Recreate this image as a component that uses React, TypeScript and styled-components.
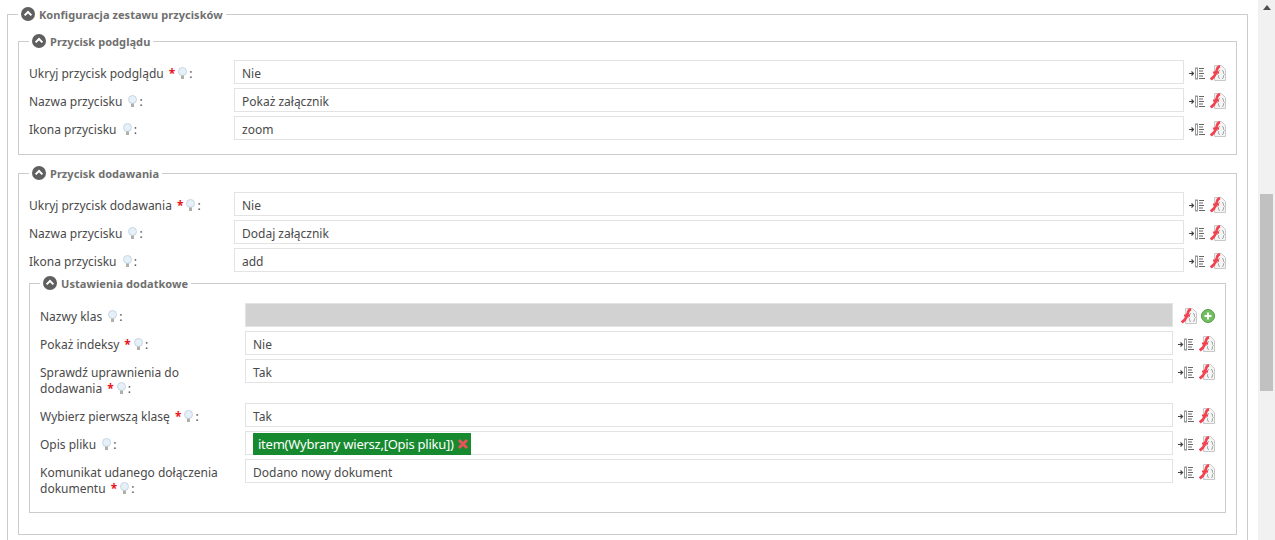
import React from "react";
import styled, { createGlobalStyle } from "styled-components";

type Field = {
  label: React.ReactNode;
  value?: string;
  required?: boolean;
  tall?: boolean;
  kind?: "classes" | "token";
};

const GlobalStyle = createGlobalStyle`
  html, body {
    margin: 0;
    padding: 0;
    height: 540px;
    overflow: hidden;
    background: #fff;
  }
  body {
    font-family: "Noto Sans", Tahoma, sans-serif;
    font-size: 12px;
    color: #4a4a4a;
  }
`;

const Page = styled.div`
  display: flex;
  width: 1275px;
  height: 540px;
  overflow: hidden;
`;

const Content = styled.div`
  flex: 1;
  min-width: 0;
  padding: 7px 10px 0 7px;
`;

const Scrollbar = styled.div`
  display: flex;
  flex-direction: column;
  align-items: center;
  width: 17px;
  height: 540px;
  flex: none;
  padding-top: 5px;
  box-sizing: border-box;
  background: #f1f1f1;
`;

const Thumb = styled.div`
  align-self: stretch;
  height: 197px;
  margin: 184px 2px 0;
  background: #c1c1c1;
`;

const Group = styled.fieldset<{ $level?: "outer" | "inner" }>`
  margin: 0;
  min-width: 0;
  border: 1px solid #ccc;
  padding: ${(p) => (p.$level === "outer" ? "13px" : "6px")} 10px ${(p) => (p.$level === "inner" ? "13px" : "14px")};
  margin-bottom: ${(p) => (p.$level === "inner" ? "7px" : "0")};
  & + & {
    margin-top: 11px;
  }
`;

const Legend = styled.legend`
  display: flex;
  align-items: center;
  gap: 4px;
  padding: 0 3px;
  height: 14px;
  font-weight: 700;
  font-size: 11px;
  letter-spacing: 0.06px;
  color: #707070;
`;

const Rows = styled.div<{ $inner?: boolean }>`
  display: flex;
  flex-direction: column;
  gap: 4px;
  padding-top: ${(p) => (p.$inner ? 7 : 6)}px;
`;

const Row = styled.div<{ $tall?: boolean }>`
  display: flex;
  align-items: flex-start;
  min-height: ${(p) => (p.$tall ? 40 : 24)}px;
`;

const Label = styled.label`
  width: 205px;
  flex: none;
  padding: 6px 8px 0 0;
  box-sizing: border-box;
  line-height: 16px;
`;

const Star = styled.span`
  color: #e8141c;
  font-weight: 700;
  margin-left: 5px;
`;

const Input = styled.div<{ $disabled?: boolean }>`
  flex: 1;
  min-width: 0;
  height: 24px;
  box-sizing: border-box;
  border: 1px solid #e3e3e3;
  background: ${(p) => (p.$disabled ? "#d2d2d2" : "#fff")};
  padding: 0 7px;
  line-height: 26px;
`;

const Token = styled.span`
  display: inline-flex;
  align-items: center;
  gap: 4px;
  height: 22px;
  margin-top: 1px;
  padding: 0 3px 0 5px;
  background: #178a30;
  color: #fff;
  font-size: 13px;
  line-height: 22px;
  letter-spacing: -0.25px;
  vertical-align: top;
`;

const Actions = styled.div`
  display: flex;
  align-items: center;
  justify-content: flex-end;
  flex: none;
  width: 42px;
  height: 24px;
  gap: 4px;
  padding-top: 2px;
  box-sizing: border-box;
`;

const Chevron = () => (
  <svg width="14" height="14" viewBox="0 0 14 14">
    <circle cx="7" cy="7" r="7" fill="#5f5f5f" />
    <path d="M3.600 8.400 7 5l3.400 3.400" fill="none" stroke="#fff" strokeWidth="2" />
  </svg>
);

const Bulb = () => (
  <svg width="11" height="13" viewBox="0 0 11 13" style={{ verticalAlign: "-2px", margin: "0 1px 0 2px" }}>
    <circle cx="5.500" cy="4.500" r="4" fill="#e6f0f8" stroke="#c5d6e4" />
    <rect x="4" y="8.500" width="3" height="3.500" fill="#b0b0a8" />
  </svg>
);

const MapIcon = () => (
  <svg width="17" height="13" viewBox="0 0 17 13">
    <path d="M0 6.500h4M2.500 4.500l2 2-2 2" fill="none" stroke="#444" strokeWidth="1.200" />
    <rect x="6.500" y="1" width="2" height="11" fill="none" stroke="#999" />
    <path d="M10 1.500h5M10 4h4M10 6.500h5M10 9h4M10 11.500h6" stroke="#666" />
  </svg>
);

const ScriptIcon = () => (
  <svg width="16" height="16" viewBox="0 0 16 16">
    <path d="M4.500.5h7l4 4v11h-11z" fill="#f5f5f5" stroke="#c8c8c8" />
    <path d="M10 5.500q-1.500 0-1.500 1.500v1.500l-1 1 1 1v1.500q0 1.500 1.500 1.500M12 5.500q1.500 0 1.500 1.500v1.500l1 1-1 1v1.500q0 1.500-1.500 1.500" fill="none" stroke="#a8a8a8" />
    <path d="M.8 14.500 4 11.500Q6 9 7 4.500 7.500 1.800 10 1.200" fill="none" stroke="#f4414f" strokeWidth="2.800" />
    <path d="M3 7.500h6" stroke="#f4414f" strokeWidth="2" />
  </svg>
);

const AddIcon = () => (
  <svg width="14" height="14" viewBox="0 0 14 14">
    <circle cx="7" cy="7" r="6.500" fill="#74bd60" stroke="#4f9d40" />
    <path d="M7 3.500v7M3.500 7h7" stroke="#fff" strokeWidth="2" />
  </svg>
);

const FieldRow = ({ field }: { field: Field }) => (
  <Row $tall={field.tall}>
    <Label>
      {field.label}
      {field.required ? <Star>*</Star> : " "}
      <Bulb />:
    </Label>
    <Input $disabled={field.kind === "classes"}>
      {field.kind === "token" ? (
        <Token>
          {field.value}
          <svg width="10" height="10" viewBox="0 0 10 10">
            <path d="M1 1l8 8M9 1 1 9" stroke="#f0505a" strokeWidth="2.800" />
          </svg>
        </Token>
      ) : (
        field.value
      )}
    </Input>
    <Actions>
      {field.kind === "classes" ? (
        <>
          <ScriptIcon />
          <AddIcon />
        </>
      ) : (
        <>
          <MapIcon />
          <ScriptIcon />
        </>
      )}
    </Actions>
  </Row>
);

const preview: Field[] = [
  { label: "Ukryj przycisk podglądu", value: "Nie", required: true },
  { label: "Nazwa przycisku", value: "Pokaż załącznik" },
  { label: "Ikona przycisku", value: "zoom" },
];

const adding: Field[] = [
  { label: "Ukryj przycisk dodawania", value: "Nie", required: true },
  { label: "Nazwa przycisku", value: "Dodaj załącznik" },
  { label: "Ikona przycisku", value: "add" },
];

const extra: Field[] = [
  { label: "Nazwy klas", kind: "classes" },
  { label: "Pokaż indeksy", value: "Nie", required: true },
  { label: "Sprawdź uprawnienia do dodawania", value: "Tak", required: true, tall: true },
  { label: "Wybierz pierwszą klasę", value: "Tak", required: true },
  { label: "Opis pliku", value: "item(Wybrany wiersz,[Opis pliku])", kind: "token" },
  { label: "Komunikat udanego dołączenia dokumentu", value: "Dodano nowy dokument", required: true, tall: true },
];

const App: React.FC = () => {
  return (
    <Page>
      <GlobalStyle />
      <Content>
        <Group $level="outer">
          <Legend>
            <Chevron />
            Konfiguracja zestawu przycisków
          </Legend>
          <Group>
            <Legend>
              <Chevron />
              Przycisk podglądu
            </Legend>
            <Rows>
              {preview.map((f, i) => (
                <FieldRow key={i} field={f} />
              ))}
            </Rows>
          </Group>
          <Group>
            <Legend>
              <Chevron />
              Przycisk dodawania
            </Legend>
            <Rows>
              {adding.map((f, i) => (
                <FieldRow key={i} field={f} />
              ))}
              <Group $level="inner">
                <Legend>
                  <Chevron />
                  Ustawienia dodatkowe
                </Legend>
                <Rows $inner>
                  {extra.map((f, i) => (
                    <FieldRow key={i} field={f} />
                  ))}
                </Rows>
              </Group>
            </Rows>
          </Group>
        </Group>
      </Content>
      <Scrollbar>
        <svg width="8" height="5" viewBox="0 0 8 5">
          <path d="M4 0l4 5H0z" fill="#505050" />
        </svg>
        <Thumb />
      </Scrollbar>
    </Page>
  );
};

export default App;
